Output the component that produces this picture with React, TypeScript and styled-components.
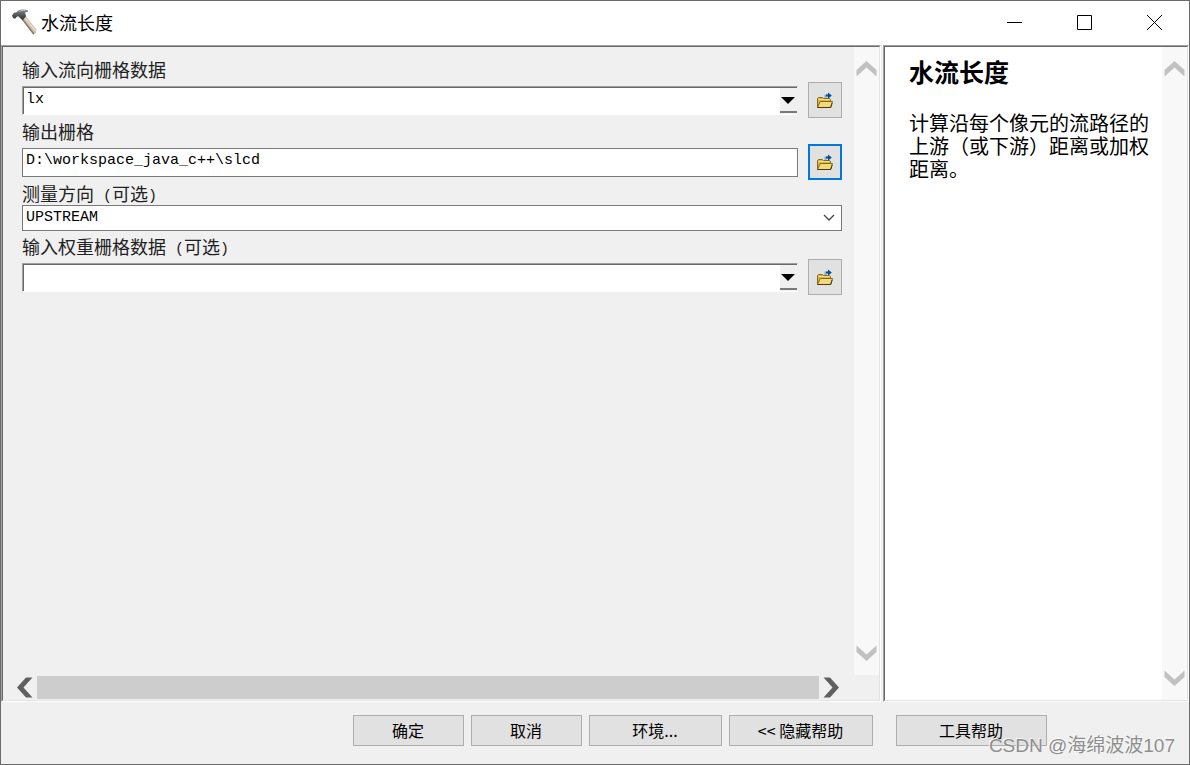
import React from "react";
import styled, { createGlobalStyle, css } from "styled-components";

const cjk = `"Noto Sans CJK SC", sans-serif`;
const mono = `"Liberation Mono", "Noto Sans CJK SC", monospace`;

const GlobalStyle = createGlobalStyle`
  *, *::before, *::after { box-sizing: border-box; }
  body { margin: 0; background: #f0f0f0; color: #000; font-family: ${cjk}; }
  button, input, select { font: inherit; color: inherit; margin: 0; }
`;

const Window = styled.div`
  position: relative;
  display: flex;
  flex-direction: column;
  min-height: 100vh;
  border: 1px solid #6b6b6b;
  background: #f0f0f0;
`;

const TitleBar = styled.header`
  display: flex;
  align-items: center;
  height: 44px;
  padding: 0 0 2px 10px;
  background: #fff;
`;

const Title = styled.h1`
  flex: 1;
  margin: 0 0 0 4px;
  font-size: 18px;
  font-weight: 400;
  line-height: 24px;
`;

const CaptionButton = styled.button`
  display: flex;
  align-items: center;
  justify-content: center;
  width: 70px;
  height: 42px;
  padding: 0;
  border: 0;
  background: transparent;
`;

const Panes = styled.main`
  flex: 1;
  display: flex;
  gap: 2px;
`;

const sunken = css`
  border: 1px solid;
  border-color: #a0a0a0 #fff #fff #a0a0a0;
`;

const Pane = styled.section<{ $help?: boolean }>`
  ${sunken}
  display: flex;
  min-width: 0;
  ${(p) => (p.$help ? "flex: 0 0 306px; background: #fff;" : "flex: 1;")}
`;

const PaneInner = styled.div`
  flex: 1;
  display: flex;
  min-width: 0;
  border: 1px solid;
  border-color: #696969 #e3e3e3 #e3e3e3 #696969;
`;

const FormArea = styled.div`
  flex: 1;
  display: flex;
  flex-direction: column;
  min-width: 0;
`;

const FormScroll = styled.div`
  flex: 1;
  display: flex;
`;

const Form = styled.form`
  flex: 1;
  display: flex;
  flex-direction: column;
  gap: 2px;
  min-width: 0;
  padding: 11px 12px 0 19px;
`;

const Label = styled.label<{ $short?: boolean }>`
  display: block;
  height: ${(p) => (p.$short ? 23 : 24)}px;
  font-size: 18px;
  line-height: 22px;
  color: #222;
  white-space: pre;
`;

const HalfWidth = styled.span`
  font-family: ${mono};
  font-size: 15px;
  line-height: 1;
  vertical-align: 1px;
`;

const Row = styled.div`
  display: flex;
  align-items: flex-start;
  gap: 10px;
  height: 36px;
`;

const Combo = styled.div`
  ${sunken}
  flex: 1;
  display: flex;
  height: 29px;
  margin-top: 4px;
  border-color: #a0a0a0 #f0f0f0 #fff #a0a0a0;
`;

const ComboInput = styled.input`
  flex: 1;
  min-width: 0;
  padding: 0 0 4px 2px;
  border: 0;
  border-top: 1px solid #696969;
  border-left: 1px solid #696969;
  border-radius: 0;
  outline: 0;
  background: #fff;
  font-family: ${mono};
  font-size: 15px;
`;

const ComboArrow = styled.button`
  display: flex;
  align-items: center;
  justify-content: center;
  width: 17px;
  height: 26px;
  padding: 2px 2px 0 0;
  border: 0;
  border-top: 1px solid #696969;
  border-bottom: 2px solid #7a7a7a;
  background: #f0f0f0;
`;

const TextBox = styled.input`
  flex: 1;
  min-width: 0;
  height: 29px;
  margin-top: 4px;
  padding: 0 3px 4px;
  border: 1px solid #7a7a7a;
  border-radius: 0;
  outline: 0;
  background: #fff;
  font-family: ${mono};
  font-size: 15px;
`;

const SelectRow = styled.div`
  position: relative;
  height: 28px;
`;

const Select = styled.select`
  appearance: none;
  display: block;
  width: 100%;
  height: 26px;
  padding: 0 3px 1px;
  border: 1px solid #7a7a7a;
  border-radius: 0;
  outline: 0;
  background: #fff;
  font-family: ${mono};
  font-size: 15px;
`;

const SelectChevron = styled.svg`
  position: absolute;
  top: 9px;
  right: 7px;
  pointer-events: none;
`;

const BrowseButton = styled.button<{ $focused?: boolean }>`
  display: flex;
  align-items: center;
  justify-content: center;
  width: 34px;
  height: 36px;
  padding: 0;
  border: ${(p) => (p.$focused ? "2px solid #0078d7" : "1px solid #adadad")};
  background: #e1e1e1;
`;

const VerticalScroll = styled.div`
  display: flex;
  flex-direction: column;
  justify-content: space-between;
  width: 25px;
  padding: 9px 0;
  background: #f8f8f8;
`;

const HorizontalScroll = styled.div`
  display: flex;
  align-items: center;
  height: 25px;
  padding: 0 35px 0 9px;
`;

const Thumb = styled.div`
  flex: 1;
  height: 23px;
  background: #cdcdcd;
`;

const ScrollButton = styled.button`
  display: flex;
  align-items: center;
  justify-content: center;
  width: 25px;
  height: 25px;
  padding: 0;
  border: 0;
  background: transparent;
`;

const HelpText = styled.article`
  flex: 1;
  min-width: 0;
  padding: 12px 0 0 24px;
`;

const HelpTitle = styled.h2`
  margin: 0 0 28px;
  font-size: 25px;
  font-weight: 700;
  line-height: 24px;
`;

const HelpBody = styled.p`
  margin: 0;
  font-size: 20px;
  line-height: 23px;
`;

const Footer = styled.footer`
  display: flex;
  gap: 2px;
  height: 62px;
  padding-top: 13px;
`;

const MainActions = styled.div`
  flex: 1;
  display: flex;
  justify-content: flex-end;
  gap: 7px;
  padding-right: 8px;
`;

const HelpActions = styled.div`
  flex: 0 0 306px;
  padding-left: 13px;
`;

const PushButton = styled.button<{ $width: number }>`
  width: ${(p) => p.$width}px;
  height: 31px;
  padding: 0 1px 2px 0;
  border: 1px solid #adadad;
  background: #e1e1e1;
  font-size: 16px;
  line-height: 24px;
`;

const Watermark = styled.span`
  position: absolute;
  right: 14px;
  bottom: 5px;
  color: #8f8f8f;
  font-family: "Liberation Sans", ${cjk};
  font-size: 19px;
  line-height: 26px;
  text-shadow: -1px -1px 0 #f8f8f8;
  pointer-events: none;
`;

const HammerIcon = () => (
  <svg width="26" height="26" viewBox="0 0 26 26" aria-hidden="true">
    <defs>
      <linearGradient id="head" x1="0" y1="0" x2="0" y2="1">
        <stop offset="0" stopColor="#8b8d8f" />
        <stop offset="0.5" stopColor="#55585a" />
        <stop offset="1" stopColor="#2e3032" />
      </linearGradient>
    </defs>
    <path d="M10 9.5 14 6.2 25.4 20.4 25 23.8 22.2 25.4Z" fill="#cdc0ab" />
    <path d="M10 9.5 22.2 25.4 23.6 24.8 11.2 8.7Z" fill="#857a6a" />
    <path d="M13.2 7.8 24.4 21.8" stroke="#eae1d2" strokeWidth="1.2" />
    <path
      d="M1 6.4 3.2 3.4 5 3.6 7.6 1.2C10.6.2 13.8.2 17 1.4L16.8 3C15.2 2.8 14.4 3.2 14 4L15.2 7.2 11.8 11 9.2 9.2 7.6 7.4 6 7.6 4.2 9.8 2 9Z"
      fill="url(#head)"
    />
    <path d="M7.8 2.4C10 1.5 12 1.3 14.5 1.7" stroke="#b8babc" fill="none" />
  </svg>
);

const FolderIcon = () => (
  <svg width="18" height="18" viewBox="0 -1 18 18" aria-hidden="true">
    <path
      d="M1.5 15.5V6.5L2.5 5.5H6.5L7.5 6.5H13.5L14.5 7.5V15.5Z"
      fill="#d9b64a"
      stroke="#86691a"
    />
    <path d="M2.5 7.5H13.5" stroke="#f3df8c" />
    <path d="M1.5 15.5 4.2 9.5H16.5L14.5 15.5Z" fill="#f3d97a" stroke="#86691a" />
    <path d="M1.5 15.5H14.8L16.2 11" stroke="#4f3c0c" fill="none" />
    <path d="M9.5 6V3.5H12" stroke="#7fb2e0" strokeWidth="2" fill="none" />
    <path d="M10 3.5H13" stroke="#0a4f96" strokeWidth="2" />
    <path d="M12 .4 15.8 3.6 12 6.8Z" fill="#0a4f96" />
  </svg>
);

const rotation = { up: 0, right: 90, down: 180, left: 270 };

const ScrollArrow = ({ dir, dark }: { dir: keyof typeof rotation; dark?: boolean }) => (
  <ScrollButton type="button" aria-label={`Scroll ${dir}`}>
    <svg width="21" height="21" viewBox="0 0 21 21" aria-hidden="true">
      <path
        d="M10.5 3 20.5 12V18.5L10.5 9.5 .5 18.5V12Z"
        fill={dark ? "#606060" : "#c1c1c1"}
        transform={`rotate(${rotation[dir]} 10.5 10.5)`}
      />
    </svg>
  </ScrollButton>
);

const Browse = ({ focused }: { focused?: boolean }) => (
  <BrowseButton type="button" aria-label="浏览" $focused={focused}>
    <FolderIcon />
  </BrowseButton>
);

const Optional = () => (
  <>
    <HalfWidth> (</HalfWidth>可选<HalfWidth>)</HalfWidth>
  </>
);

const RasterCombo = ({ id, value }: { id: string; value: string }) => (
  <Combo>
    <ComboInput id={id} defaultValue={value} />
    <ComboArrow type="button" aria-label="展开列表">
      <svg width="14" height="7" viewBox="0 0 14 7" aria-hidden="true">
        <path d="M0 0H14L7 7Z" />
      </svg>
    </ComboArrow>
  </Combo>
);

export default function App() {
  return (
    <>
      <GlobalStyle />
      <Window>
        <TitleBar>
          <HammerIcon />
          <Title>水流长度</Title>
          <CaptionButton type="button" aria-label="最小化">
            <svg width="15" height="15" viewBox="0 0 15 15">
              <path d="M0 7.5H15" stroke="#000" />
            </svg>
          </CaptionButton>
          <CaptionButton type="button" aria-label="最大化">
            <svg width="15" height="15" viewBox="0 0 15 15">
              <path d="M.5 .5H14.5V14.5H.5Z" stroke="#000" fill="none" />
            </svg>
          </CaptionButton>
          <CaptionButton type="button" aria-label="关闭">
            <svg width="15" height="15" viewBox="0 0 15 15">
              <path d="M0 0 15 15M15 0 0 15" stroke="#000" />
            </svg>
          </CaptionButton>
        </TitleBar>

        <Panes>
          <Pane>
            <PaneInner>
              <FormArea>
                <FormScroll>
                  <Form>
                    <div>
                      <Label htmlFor="direction-raster">输入流向栅格数据</Label>
                      <Row>
                        <RasterCombo id="direction-raster" value="lx" />
                        <Browse />
                      </Row>
                    </div>
                    <div>
                      <Label htmlFor="output-raster">输出栅格</Label>
                      <Row>
                        <TextBox id="output-raster" defaultValue="D:\workspace_java_c++\slcd" />
                        <Browse focused />
                      </Row>
                    </div>
                    <div>
                      <Label htmlFor="measure" $short>
                        测量方向
                        <Optional />
                      </Label>
                      <SelectRow>
                        <Select id="measure" defaultValue="UPSTREAM">
                          <option>UPSTREAM</option>
                          <option>DOWNSTREAM</option>
                        </Select>
                        <SelectChevron width="12" height="8" viewBox="0 0 12 8">
                          <path d="M1 1 6 6 11 1" stroke="#444" strokeWidth="1.3" fill="none" />
                        </SelectChevron>
                      </SelectRow>
                    </div>
                    <div>
                      <Label htmlFor="weight-raster">
                        输入权重栅格数据
                        <Optional />
                      </Label>
                      <Row>
                        <RasterCombo id="weight-raster" value="" />
                        <Browse />
                      </Row>
                    </div>
                  </Form>
                  <VerticalScroll>
                    <ScrollArrow dir="up" />
                    <ScrollArrow dir="down" />
                  </VerticalScroll>
                </FormScroll>
                <HorizontalScroll>
                  <ScrollArrow dir="left" dark />
                  <Thumb />
                  <ScrollArrow dir="right" dark />
                </HorizontalScroll>
              </FormArea>
            </PaneInner>
          </Pane>

          <Pane $help>
            <PaneInner>
              <HelpText>
                <HelpTitle>水流长度</HelpTitle>
                <HelpBody>计算沿每个像元的流路径的上游（或下游）距离或加权距离。</HelpBody>
              </HelpText>
              <VerticalScroll>
                <ScrollArrow dir="up" />
                <ScrollArrow dir="down" />
              </VerticalScroll>
            </PaneInner>
          </Pane>
        </Panes>

        <Footer>
          <MainActions>
            <PushButton type="button" $width={111}>确定</PushButton>
            <PushButton type="button" $width={111}>取消</PushButton>
            <PushButton type="button" $width={133}>环境...</PushButton>
            <PushButton type="button" $width={144}>&lt;&lt; 隐藏帮助</PushButton>
          </MainActions>
          <HelpActions>
            <PushButton type="button" $width={151}>工具帮助</PushButton>
          </HelpActions>
        </Footer>
        <Watermark>CSDN @海绵波波107</Watermark>
      </Window>
    </>
  );
}
